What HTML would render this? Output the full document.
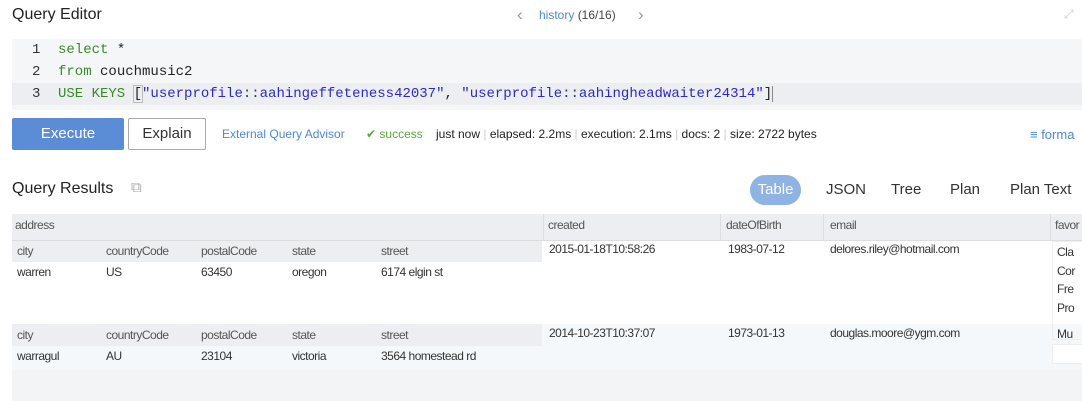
<!DOCTYPE html>
<html><head><style>
*{margin:0;padding:0;box-sizing:border-box}
body{width:1082px;height:401px;overflow:hidden;background:#fff;font-family:"Liberation Sans",sans-serif;color:#222;position:relative}
.a{position:absolute;white-space:nowrap}
.mono{font-family:"Liberation Mono",monospace;font-size:14px}
.g{color:#3a8a2a}.b{color:#2a2acc}
.t{font-size:12px;letter-spacing:-0.5px;color:#333}
.th{color:#555}
</style></head><body>
<div class="a" style="left:12px;top:6px;font-size:16px;color:#222">Query Editor</div>
<div class="a" style="left:517px;top:5px;font-size:17px;color:#999">&lsaquo;</div>
<div class="a" style="left:539px;top:8px;font-size:12px"><span style="color:#4a8ad6">history</span> <span style="color:#444">(16/16)</span></div>
<div class="a" style="left:638px;top:5px;font-size:17px;color:#999">&rsaquo;</div>
<div class="a" style="left:1064px;top:7px;font-size:12px;color:#ccc">&#10530;</div>

<div class="a" style="left:12px;top:39px;width:1070px;height:71px;background:#f5f6f8"></div>
<div class="a" style="left:12px;top:83px;width:1070px;height:22px;background:#eceef1"></div>
<div class="a mono" style="left:32px;top:39px;line-height:22px;color:#333">1<br>2<br>3</div>
<div class="a mono" style="left:58px;top:39px;line-height:22px"><span class="g">select</span> *<br><span class="g">from</span> couchmusic2<br><span class="g">USE KEYS</span> <span style="outline:1px solid #bbb">[</span><span class="b">"userprofile::aahingeffeteness42037"</span>, <span class="b">"userprofile::aahingheadwaiter24314"</span>]<span style="border-left:1px solid #888"></span></div>

<div class="a" style="left:12px;top:118px;width:112px;height:32px;background:#5b8dd6;border-radius:2px;color:#fff;font-size:15px;text-align:center;line-height:32px">Execute</div>
<div class="a" style="left:128px;top:118px;width:78px;height:32px;border:1px solid #aaa;border-radius:2px;font-size:15px;text-align:center;line-height:30px;color:#333">Explain</div>
<div class="a" style="left:222px;top:127px;font-size:12px;color:#4a8ad6">External Query Advisor</div>
<div class="a" style="left:366px;top:127px;font-size:12px;color:#5aa83a">&#10004; success</div>
<div class="a" style="left:436px;top:127px;font-size:12px;color:#222">just now <span style="color:#ccc">|</span> elapsed: 2.2ms <span style="color:#ccc">|</span> execution: 2.1ms <span style="color:#ccc">|</span> docs: 2 <span style="color:#ccc">|</span> size: 2722 bytes</div>
<div class="a" style="left:1030px;top:127px;font-size:13px;color:#4a8ad6">&#8801; forma</div>

<div class="a" style="left:12px;top:180px;font-size:16px">Query Results</div>
<div class="a" style="left:131px;top:179px;font-size:15px;color:#aaa">&#10697;</div>
<div class="a" style="left:750px;top:175px;width:51px;height:30px;background:#8fb3e3;border-radius:15px;color:#fff;font-size:15px;text-align:center;line-height:30px">Table</div>
<div class="a" style="left:826px;top:181px;font-size:15px;color:#333">JSON</div>
<div class="a" style="left:891px;top:181px;font-size:15px;color:#333">Tree</div>
<div class="a" style="left:950px;top:181px;font-size:15px;color:#333">Plan</div>
<div class="a" style="left:1010px;top:181px;font-size:15px;color:#333">Plan Text</div>

<div class="a" style="left:12px;top:214px;width:1070px;height:187px;background:#f3f4f6"></div>
<div class="a" style="left:12px;top:214px;width:1070px;height:27px;background:#eceef1;border-bottom:1px solid #ddd"></div>
<div class="a" style="left:12px;top:241px;width:1070px;height:83px;background:#fff"></div>
<div class="a" style="left:12px;top:324px;width:1070px;height:46px;background:#f5f8fb"></div>
<div class="a" style="left:543px;top:214px;width:1px;height:27px;background:#ddd"></div>
<div class="a" style="left:720px;top:214px;width:1px;height:27px;background:#ddd"></div>
<div class="a" style="left:823px;top:214px;width:1px;height:27px;background:#ddd"></div>
<div class="a" style="left:1050px;top:214px;width:1px;height:27px;background:#ddd"></div>
<div class="a t th" style="left:15px;top:218px">address</div>
<div class="a t th" style="left:548px;top:218px">created</div>
<div class="a t th" style="left:726px;top:218px">dateOfBirth</div>
<div class="a t th" style="left:830px;top:218px">email</div>
<div class="a t th" style="left:1055px;top:218px">favor</div>

<div class="a" style="left:12px;top:241px;width:530px;height:21px;background:#eceef1"></div>
<div class="a" style="left:12px;top:324px;width:530px;height:22px;background:#eceef1"></div>
<div class="a" style="left:1052px;top:241px;width:30px;height:99px;border:1px solid #eee;border-right:none"></div>
<div class="a" style="left:1052px;top:344px;width:30px;height:20px;border:1px solid #eee;border-right:none;background:#fff"></div>

<div class="a t th" style="left:17px;top:244px">city</div>
<div class="a t th" style="left:106px;top:244px">countryCode</div>
<div class="a t th" style="left:201px;top:244px">postalCode</div>
<div class="a t th" style="left:292px;top:244px">state</div>
<div class="a t th" style="left:381px;top:244px">street</div>
<div class="a t" style="left:17px;top:265px">warren</div>
<div class="a t" style="left:106px;top:265px">US</div>
<div class="a t" style="left:201px;top:265px">63450</div>
<div class="a t" style="left:292px;top:265px">oregon</div>
<div class="a t" style="left:381px;top:265px">6174 elgin st</div>
<div class="a t" style="left:549px;top:242px">2015-01-18T10:58:26</div>
<div class="a t" style="left:728px;top:242px">1983-07-12</div>
<div class="a t" style="left:830px;top:242px">delores.riley@hotmail.com</div>
<div class="a t" style="left:1057px;top:243px;line-height:18.5px">Cla<br>Cor<br>Fre<br>Pro</div>

<div class="a t th" style="left:17px;top:328px">city</div>
<div class="a t th" style="left:106px;top:328px">countryCode</div>
<div class="a t th" style="left:201px;top:328px">postalCode</div>
<div class="a t th" style="left:292px;top:328px">state</div>
<div class="a t th" style="left:381px;top:328px">street</div>
<div class="a t" style="left:17px;top:349px">warragul</div>
<div class="a t" style="left:106px;top:349px">AU</div>
<div class="a t" style="left:201px;top:349px">23104</div>
<div class="a t" style="left:292px;top:349px">victoria</div>
<div class="a t" style="left:381px;top:349px">3564 homestead rd</div>
<div class="a t" style="left:549px;top:326px">2014-10-23T10:37:07</div>
<div class="a t" style="left:728px;top:326px">1973-01-13</div>
<div class="a t" style="left:830px;top:326px">douglas.moore@ygm.com</div>
<div class="a t" style="left:1057px;top:327px">Mu</div>
</body></html>
